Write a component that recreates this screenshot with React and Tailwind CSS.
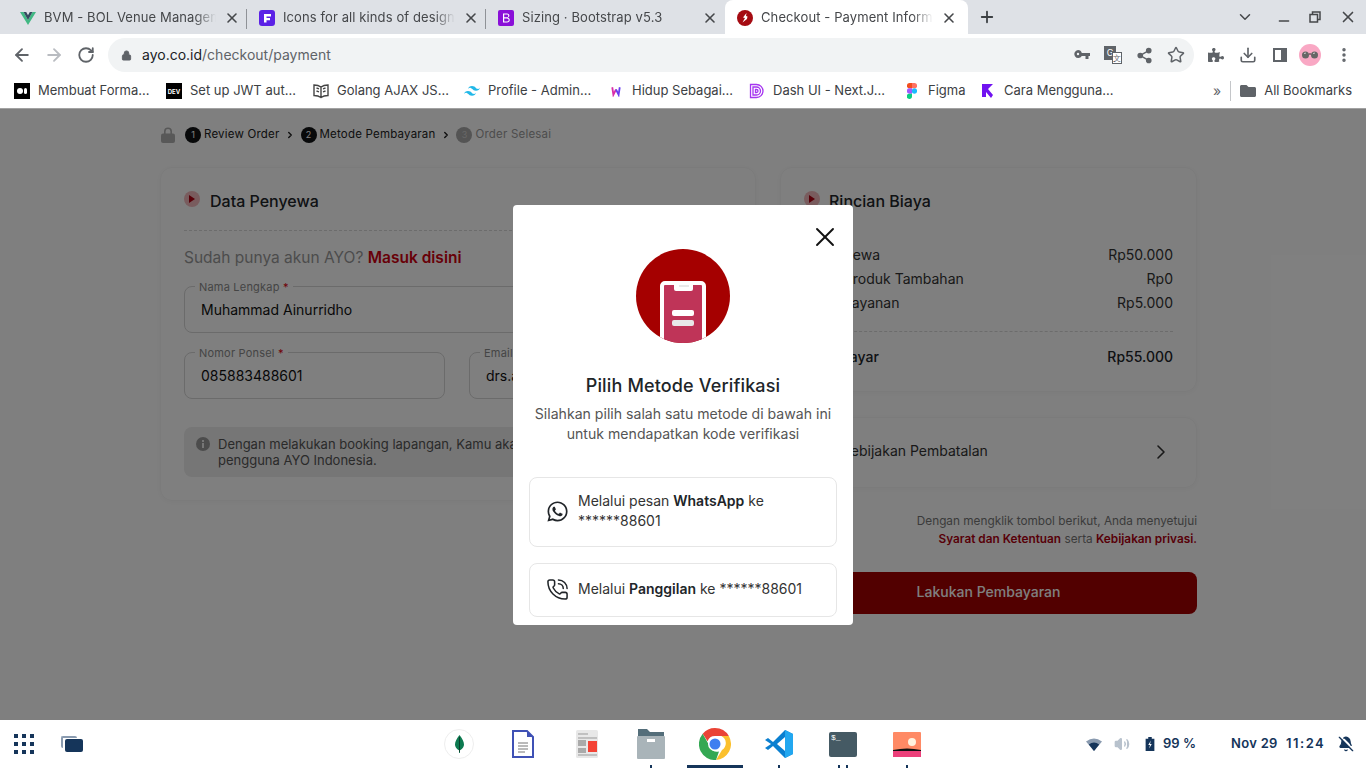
import React from "react";
import { ArrowLeft, ArrowRight, RotateCw, Lock, Share2, Star, Download, X, Plus, ChevronDown, ChevronRight, Minus, EllipsisVertical, PhoneCall, BellOff, Volume2 } from "lucide-react";
import { FaWhatsapp, FaPuzzlePiece, FaFolder } from "react-icons/fa";

const Vue = () => (
  <svg viewBox="0 0 16 16" className="w-4 h-4"><path d="M0 2h3.500L8 10l4.500-8H16L8 15z" fill="#41b883" /><path d="M3.500 2h2.700L8 5.200 9.800 2h2.700L8 10z" fill="#35495e" /></svg>
);
const Framer = () => (
  <svg viewBox="0 0 16 16" className="w-4 h-4"><rect width="16" height="16" rx="3" fill="#5b21e6" /><path d="M5 4h7v2.500H7.500V8H11v2.300H7.500V12.500H5z" fill="#fff" /></svg>
);
const Boot = () => (
  <svg viewBox="0 0 16 16" className="w-4 h-4"><rect width="16" height="16" rx="2" fill="#8a0fd8" /><path d="M5 3.500h4c3 0 3 3.600.8 4.200 2.800.5 2.600 4.800-.8 4.800H5zM6.200 4.600v2.700H9c1.700 0 1.700-2.700 0-2.700zm0 3.800v3H9.200c2 0 2-3-.2-3z" fill="#fff" /></svg>
);
const Ayo = () => (
  <svg viewBox="0 0 16 16" className="w-4 h-4"><circle cx="8" cy="8" r="8" fill="#a50b12" /><path d="M9.500 3 6 7.500l2 .5-2.500 4.500 4.500-3.500.5-2.500-1.500-.5z" fill="#fff" /></svg>
);

const Tab = ({ icon, title, active, sep }) => (
  <div className={active ? "relative w-[243px] h-[34px] flex items-center pl-3 pr-[11px] pt-[2px] bg-white rounded-t-lg" : "relative w-[239px] h-[34px] flex items-center pl-3 pr-[7px] pt-[2px]"}>
    <span className="w-4 h-4 shrink-0">{icon}</span>
    <span className="ml-[8px] w-[172px] overflow-hidden whitespace-nowrap text-[13px] text-[#45474a] tracking-[0.1px] [mask-image:linear-gradient(to_right,black_88%,transparent)]">{title}</span>
    <X className="ml-auto w-4 h-4 text-[#45474a] shrink-0" strokeWidth={2.400} />
    {sep && <span className="absolute right-0 top-[9px] h-[20px] w-px bg-[#8f9297]" />}
  </div>
);

const Bookmark = ({ w, icon, label }) => (
  <div className={`${w} flex items-center shrink-0`}>
    <span className="w-4 h-4 shrink-0 flex items-center justify-center">{icon}</span>
    <span className="ml-2 text-[13px] text-[#3c4043] whitespace-nowrap">{label}</span>
  </div>
);

const Step = ({ n, label, dim }) => (
  <div className={dim ? "flex items-center gap-[3px] text-[#9a9a9a]" : "flex items-center gap-[3px] text-[#222]"}>
    <span className={dim ? "w-4 h-4 rounded-full bg-[#a8a8a8] text-[#d0d0d0] text-[9px] flex items-center justify-center" : "w-4 h-4 rounded-full bg-[#101214] text-white text-[9px] flex items-center justify-center"}>{n}</span>
    <span className="text-[11.500px] tracking-[0.2px] whitespace-nowrap">{label}</span>
  </div>
);

const CardTitle = ({ children, gap }) => (
  <div className={`flex items-center ${gap}`}>
    <span className="w-4 h-4 rounded-full bg-[#f3b9bc] flex items-center justify-center -mt-1">
      <svg viewBox="0 0 8 8" className="w-2 h-2"><path d="M1 0l6 4-6 4z" fill="#b00010" /></svg>
    </span>
    <span className="text-[16px] font-medium text-[#212529]">{children}</span>
  </div>
);

const Field = ({ label, value, className }) => (
  <div className={`relative h-[47px] rounded-lg border border-[#d6d6d6] flex items-center px-4 ${className}`}>
    <span className="absolute -top-[7px] left-[10px] bg-white px-[4px] text-[11px] leading-[14px] text-[#8a8a8a] tracking-[0.2px] whitespace-nowrap">{label} <span className="text-[#e00010]">*</span></span>
    <span className="text-[14px] text-[#111] whitespace-nowrap">{value}</span>
  </div>
);

const Row = ({ l, r, bold }) => (
  <div className={bold ? "flex justify-between font-medium text-[14px] text-[#212529] h-6 items-center" : "flex justify-between text-[14px] text-[#333] h-6 items-center"}>
    <span>{l}</span><span>{r}</span>
  </div>
);

const Dock = ({ children, dots = 0, active }) => (
  <div className="relative w-[64px] h-[48px] flex items-center justify-center">
    {children}
    {active && <span className="absolute bottom-0 left-[4px] w-[56px] h-[3px] bg-[#15355a]" />}
    {dots > 0 && (
      <span className="absolute bottom-0 left-0 right-0 flex justify-center gap-[6px]">
        {Array.from({ length: dots }).map((_, i) => <span key={i} className="w-[2px] h-[3px] bg-[#15355a]" />)}
      </span>
    )}
  </div>
);

export default function App() {
  return (
    <div className="w-[1366px] h-screen flex flex-col overflow-hidden bg-white font-['Inter','Liberation_Sans',sans-serif]">
      {/* tab strip */}
      <div className="h-[34px] bg-[#dee1e6] flex items-center pl-2 shrink-0">
        <Tab icon={<Vue />} title="BVM - BOL Venue Management" sep />
        <Tab icon={<Framer />} title="Icons for all kinds of design projects" sep />
        <Tab icon={<Boot />} title="Sizing · Bootstrap v5.3" />
        <Tab icon={<Ayo />} title="Checkout - Payment Information" active />
        <Plus className="ml-[10px] w-[18px] h-[18px] text-[#3c4043]" strokeWidth={2.400} />
        <div className="ml-auto flex items-center text-[#45474a]">
          <ChevronDown className="w-[18px] h-[18px]" strokeWidth={2} />
          <Minus className="ml-[22px] w-[16px] h-[16px] mt-[8px]" strokeWidth={2} />
          <svg viewBox="0 0 12 12" className="ml-[17px] w-3 h-3" fill="none" stroke="#45474a" strokeWidth="1.500"><rect x="1" y="3.500" width="7.500" height="7.500" /><path d="M3.500 3V1h7.500v7.500H8.500" /></svg>
          <X className="ml-[18px] mr-[9px] w-[18px] h-[18px]" strokeWidth={2.200} />
        </div>
      </div>

      {/* toolbar */}
      <div className="h-[42px] bg-white flex items-center pl-[12px] shrink-0 text-[#5f6368]">
        <ArrowLeft className="w-5 h-5" strokeWidth={2.200} />
        <ArrowRight className="ml-[12px] w-5 h-5 text-[#b9bcc1]" strokeWidth={2.200} />
        <RotateCw className="ml-[13px] w-[18px] h-[18px]" strokeWidth={2.400} />
        <div className="ml-[13px] w-[1086px] h-[34px] rounded-full bg-[#f1f3f4] flex items-center pl-[13px]">
          <Lock className="w-[11px] h-[13px] fill-[#5f6368]" strokeWidth={2} />
          <span className="ml-[10px] -mt-[2px] text-[14px] text-[#202124]">ayo.co.id<span className="text-[#5f6368]">/checkout/payment</span></span>
          <div className="ml-auto flex items-center gap-[14px] pr-[9px]">
            <svg viewBox="0 0 16 10" className="w-[16px] h-[10px]" fill="#5f6368"><path d="M4 0a4 4 0 0 1 3.800 3H16v3h-1.500v3h-3V6H7.800A4 4 0 1 1 4 0zm0 2.800a1.200 1.200 0 1 0 0 2.400 1.200 1.200 0 0 0 0-2.400z" /></svg>
            <span className="w-[18px] h-[18px] relative flex">
              <span className="w-[12px] h-[14px] bg-[#5f6368] text-white text-[9px] leading-[14px] text-center">G</span>
              <span className="absolute right-0 bottom-0 w-[10px] h-[12px] border border-[#5f6368] bg-white text-[8px] leading-[10px] text-center text-[#5f6368]">文</span>
            </span>
            <Share2 className="w-[17px] h-[17px] fill-[#5f6368]" strokeWidth={2} />
            <Star className="w-[18px] h-[18px]" strokeWidth={2} />
          </div>
        </div>
        <FaPuzzlePiece className="ml-[14px] w-[16px] h-[16px]" />
        <Download className="ml-[15px] w-[18px] h-[18px]" strokeWidth={2.200} />
        <span className="ml-[16px] w-[14px] h-[14px] border-2 border-[#5f6368] border-r-[6px]" />
        <span className="ml-[12px] w-[22px] h-[22px] rounded-full bg-[#f9a8c4] flex items-center justify-center">
          <svg viewBox="0 0 18 8" className="w-[18px] h-[8px]"><circle cx="4.500" cy="4" r="3.500" fill="#666" /><circle cx="13.500" cy="4" r="3.500" fill="#666" /><path d="M8 3h2" stroke="#333" strokeWidth="1" /><path d="M3 2.500l2-.5M12 2.500l2-.5" stroke="#ccc" strokeWidth="1" /></svg>
        </span>
        <EllipsisVertical className="ml-[14px] w-[18px] h-[18px]" strokeWidth={2.600} />
      </div>

      {/* bookmarks */}
      <div className="h-[33px] bg-white border-b border-[#a2a2a2] flex items-center pl-[14px] shrink-0 pb-[2px]">
        <Bookmark w="w-[152px]" label="Membuat Forma..." icon={<span className="w-4 h-4 bg-black flex items-center justify-center gap-px"><span className="w-[6px] h-[6px] rounded-full bg-white" /><span className="w-[3px] h-[6px] rounded-full bg-white" /></span>} />
        <Bookmark w="w-[147px]" label="Set up JWT aut..." icon={<span className="w-4 h-4 bg-black text-white text-[6px] font-bold flex items-center justify-center">DEV</span>} />
        <Bookmark w="w-[151px]" label="Golang AJAX JS..." icon={<svg viewBox="0 0 16 16" className="w-4 h-4" fill="none" stroke="#444" strokeWidth="1.400"><path d="M8 4C6 2.500 3.500 2 1 2v10.500c2.500 0 5 .5 7 2 2-1.500 4.500-2 7-2V2c-2.500 0-5 .5-7 2zM8 4v10.500M3.500 5l2.500.8M3.500 8l2.500.8M10 5.800l2.500-.8M10 8.800l2.500-.8" /></svg>} />
        <Bookmark w="w-[144px]" label="Profile - Admin..." icon={<svg viewBox="0 0 16 10" className="w-4 h-[10px]" fill="#22b8e8"><path d="M8 0C5.900 0 4.500 1 4 3c.8-1 1.700-1.400 2.800-1.100.6.200 1 .6 1.500 1.100.8.800 1.700 1.700 3.700 1.700 2.100 0 3.500-1 4-3-.8 1-1.700 1.400-2.800 1.100-.6-.2-1-.6-1.500-1.100C10.900.900 10 0 8 0zM4 5C1.900 5 .5 6 0 8c.8-1 1.700-1.400 2.800-1.100.6.200 1 .6 1.500 1.100.8.800 1.700 1.700 3.700 1.700 2.100 0 3.500-1 4-3-.8 1-1.700 1.400-2.800 1.100-.6-.2-1-.6-1.500-1.100C6.900 5.900 6 5 4 5z" /></svg>} />
        <Bookmark w="w-[141px]" label="Hidup Sebagai..." icon={<svg viewBox="0 0 16 16" className="w-[12px] h-[12px]" fill="none" strokeWidth="2.400"><path d="M3 3l1.500 10L8 6" stroke="#d92ea8" /><path d="M8 6l3.500 7L13 3" stroke="#6a3df0" /></svg>} />
        <Bookmark w="w-[155px]" label="Dash UI - Next.J..." icon={<svg viewBox="0 0 16 16" className="w-4 h-4" fill="none" stroke="#a535f0" strokeWidth="1.300"><path d="M1.500 1.500h6a6.500 6.500 0 0 1 0 13h-6zM4 4h3.500a4 4 0 0 1 0 8H4zM6.500 6.500h1a1.500 1.500 0 0 1 0 3h-1z" /></svg>} />
        <Bookmark w="w-[76px]" label="Figma" icon={<svg viewBox="0 0 10 16" className="w-[10px] h-4"><path d="M2.500 0H5v5.300H2.500a2.650 2.650 0 0 1 0-5.300z" fill="#f24e1e" /><path d="M5 0h2.500a2.650 2.650 0 0 1 0 5.300H5z" fill="#ff7262" /><path d="M2.500 5.300H5v5.400H2.500a2.700 2.700 0 0 1 0-5.400z" fill="#a259ff" /><circle cx="7.500" cy="8" r="2.650" fill="#1abcfe" /><path d="M2.500 10.700H5v2.650a2.650 2.650 0 1 1-2.500-2.650z" fill="#0acf83" /></svg>} />
        <Bookmark w="w-[210px]" label="Cara Mengguna..." icon={<svg viewBox="0 0 16 16" className="w-4 h-4" fill="#7012f0"><path d="M2 1h11L8 6l5 6-2 3-5-6v5H2z" /></svg>} />
        <span className="ml-[23px] text-[14px] text-[#5f6368] leading-none">»</span>
        <span className="ml-[9px] w-px h-[20px] bg-[#c4c6c9]" />
        <FaFolder className="ml-[9px] w-4 h-4 text-[#5f6368]" />
        <span className="ml-2 text-[13px] text-[#3c4043] whitespace-nowrap">All Bookmarks</span>
      </div>

      {/* page */}
      <div className="relative flex-1 min-h-0 bg-white overflow-hidden">
        <div className="ml-[160px] w-[1037px] pt-[18px]">
          <div className="flex items-center h-4 text-[#222]">
            <svg viewBox="0 0 14 16" className="ml-px w-[14px] h-[16px]" fill="#b0b0b0"><path d="M3 7V4.500a4 4 0 0 1 8 0V7h-1.600V4.500a2.400 2.400 0 0 0-4.800 0V7z" /><rect y="6.500" width="14" height="9.500" rx="2" /></svg>
            <div className="ml-[10px] flex items-center">
              <Step n="1" label="Review Order" />
              <ChevronRight className="mx-[5.500px] w-[10px] h-[10px] text-[#222]" strokeWidth={3.400} />
              <Step n="2" label="Metode Pembayaran" />
              <ChevronRight className="mx-[5.500px] w-[10px] h-[10px] text-[#222]" strokeWidth={3.400} />
              <Step n="3" label="Order Selesai" dim />
            </div>
          </div>

          <div className="mt-[24px] flex gap-[24px] items-start">
            {/* left card */}
            <div className="w-[596px] h-[334px] rounded-xl border border-[#f6f6f6] shadow-[0_1px_6px_rgba(0,0,0,0.04)] px-[23px] pt-[21px]">
              <CardTitle gap="gap-[10px]">Data Penyewa</CardTitle>
              <div className="mt-[17px] border-t border-dashed border-[#d8d8d8]" />
              <div className="mt-[17px] text-[15.500px] text-[#999] leading-[20px]">Sudah punya akun AYO? <span className="font-semibold text-[#d00010]">Masuk disini</span></div>
              <Field className="mt-[18px]" label="Nama Lengkap" value="Muhammad Ainurridho" />
              <div className="mt-[19px] flex gap-[24px]">
                <Field className="w-[261px]" label="Nomor Ponsel" value="085883488601" />
                <Field className="flex-1" label="Email" value="drs.ainurridho@gmail.com" />
              </div>
              <div className="mt-[28px] h-[50px] rounded-lg bg-[#ececec] flex gap-[8px] px-[12px] items-start pt-[9px]">
                <svg viewBox="0 0 14 14" className="w-[14px] h-[14px] shrink-0 mt-px"><circle cx="7" cy="7" r="7" fill="#999" /><rect x="6" y="6" width="2" height="5" fill="#ececec" /><rect x="6" y="3" width="2" height="2" fill="#ececec" /></svg>
                <span className="text-[13px] leading-[16px] text-[#555]">Dengan melakukan booking lapangan, Kamu akan otomatis terdaftar sebagai pengguna AYO Indonesia.</span>
              </div>
            </div>

            {/* right column */}
            <div className="w-[417px]">
              <div className="h-[225px] rounded-xl border border-[#f6f6f6] shadow-[0_1px_6px_rgba(0,0,0,0.04)] pl-[23px] pr-[23px] pt-[21px]">
                <CardTitle gap="gap-[9px]">Rincian Biaya</CardTitle>
                <div className="mt-[29px]">
                  <Row l="Biaya Sewa" r="Rp50.000" />
                  <Row l="Biaya Produk Tambahan" r="Rp0" />
                  <Row l="Biaya Layanan" r="Rp5.000" />
                </div>
                <div className="mt-[17px] border-t border-dashed border-[#d8d8d8]" />
                <div className="mt-[12px]"><Row bold l="Total Bayar" r="Rp55.000" /></div>
              </div>
              <div className="mt-[25px] h-[71px] rounded-xl border border-[#f6f6f6] shadow-[0_1px_6px_rgba(0,0,0,0.04)] pl-[61px] pr-[24px] flex items-center justify-between">
                <span className="text-[14px] text-[#333] -mt-[4px]">Kebijakan Pembatalan</span>
                <ChevronRight className="w-[24px] h-[24px] text-[#333] -mr-[1px] -mt-[2px]" strokeWidth={1.600} />
              </div>
              <div className="mt-[24px] text-right text-[11.800px] leading-[18px] text-[#777]">
                <div>Dengan mengklik tombol berikut, Anda menyetujui</div>
                <div><span className="font-semibold text-[#b00010]">Syarat dan Ketentuan</span> serta <span className="font-semibold text-[#b00010]">Kebijakan privasi.</span></div>
              </div>
              <div className="mt-[24px] h-[42px] rounded-lg bg-[#a50000] flex items-center justify-center pb-[3px] text-[14px] font-medium text-white">Lakukan Pembayaran</div>
            </div>
          </div>
        </div>

        {/* overlay + modal */}
        <div className="absolute inset-0 bg-black/50 flex items-center justify-center">
          <div className="relative w-[340px] h-[420px] bg-white rounded-[4px] flex flex-col items-center pt-[44px] px-[16px]">
            <X className="absolute top-[16px] right-[12px] w-[32px] h-[32px] text-[#111]" strokeWidth={1.400} />
            <div className="relative w-[94px] h-[94px] rounded-full bg-[#a50000] overflow-hidden shrink-0">
              <div className="absolute left-[24px] top-[32px] w-[46px] h-[70px] rounded-[5px] border-[4px] border-white bg-[#bf3458]">
                <div className="absolute left-[10px] -top-[1px] w-[19px] h-[7px] rounded-b-[2px] bg-white flex justify-center pt-px">
                  <span className="w-[10px] h-[2px] bg-[#e8e8e8]" />
                </div>
                <div className="absolute left-[8px] top-[25px] w-[22px] h-[6px] rounded-[2px] bg-white" />
                <div className="absolute left-[8px] top-[35px] w-[22px] h-[6px] rounded-[2px] bg-[#e8e8e8]" />
              </div>
            </div>
            <div className="mt-[32px] text-[18px] leading-[22px] font-medium tracking-[0.15px] text-[#212529] whitespace-nowrap">Pilih Metode Verifikasi</div>
            <div className="mt-[7px] text-center text-[14.100px] leading-[20px] text-[#555] whitespace-nowrap">Silahkan pilih salah satu metode di bawah ini<br />untuk mendapatkan kode verifikasi</div>
            <div className="mt-[33px] w-[308px] h-[70px] rounded-lg border border-[#e6e6e6] flex items-center pl-[16px] pr-[12px] gap-[9px] shrink-0">
              <FaWhatsapp className="w-[23px] h-[23px] text-[#212529] shrink-0" />
              <span className="text-[14px] leading-[20px] text-[#333] -mt-[2px]">Melalui pesan <b className="font-semibold text-[#212529]">WhatsApp</b> ke<br />******88601</span>
            </div>
            <div className="mt-[16px] w-[308px] h-[54px] rounded-lg border border-[#e6e6e6] flex items-center pl-[16px] pr-[12px] gap-[9px] shrink-0">
              <PhoneCall className="w-[23px] h-[23px] text-[#212529] shrink-0" strokeWidth={1.600} />
              <span className="text-[14px] leading-[20px] text-[#333] whitespace-nowrap -mt-[2px]">Melalui <b className="font-semibold text-[#212529]">Panggilan</b> ke ******88601</span>
            </div>
          </div>
        </div>
      </div>

      {/* taskbar */}
      <div className="h-[48px] bg-white flex items-center shrink-0 relative">
        <div className="ml-[14px] grid grid-cols-3 gap-[4px] w-[20px]">
          {Array.from({ length: 9 }).map((_, i) => <span key={i} className="w-[4px] h-[4px] bg-[#15355a]" />)}
        </div>
        <div className="relative ml-[27px] w-[22px] h-[16px]">
          <span className="absolute left-0 top-0 w-[16px] h-[12px] rounded-[2px] border-l-2 border-t-2 border-[#8a9bb0]" />
          <span className="absolute right-0 bottom-0 w-[18px] h-[13px] rounded-[2px] bg-[#15355a]" />
        </div>
        <div className="ml-[344px] flex">
          <Dock>
            <span className="w-[30px] h-[30px] rounded-full bg-white border border-[#eee] flex items-center justify-center">
              <svg viewBox="0 0 10 20" className="w-[9px] h-[18px]"><path d="M5 0c3 4 5 7 5 10.500S7 16 5.500 17v3h-1v-3C3 16 0 14 0 10.500S2 4 5 0z" fill="#0d7a50" /><path d="M5 2v17" stroke="#0a3a28" strokeWidth="1" /></svg>
            </span>
          </Dock>
          <Dock>
            <svg viewBox="0 0 22 28" className="w-[22px] h-[28px]"><path d="M1 1h14l6 6v20H1z" fill="#fff" stroke="#3f51b5" strokeWidth="2" /><path d="M15 1v6h6z" fill="#3f51b5" /><path d="M6 13h10M6 16h10M6 19h10M6 22h7" stroke="#777" strokeWidth="1" /></svg>
          </Dock>
          <Dock>
            <svg viewBox="0 0 22 28" className="w-[22px] h-[28px]"><rect width="22" height="28" rx="1.500" fill="#e8e8e8" /><path d="M2 4h10M2 8h19M2 25h19" stroke="#999" strokeWidth="1" /><rect x="2" y="10" width="8" height="6" fill="#aaa" /><rect x="2" y="18" width="8" height="5" fill="#aaa" /><rect x="12" y="11" width="9" height="11" fill="#f44336" /></svg>
          </Dock>
          <Dock dots={1}>
            <svg viewBox="0 0 28 30" className="w-[28px] h-[30px]"><path d="M1 0h9l3 3h14v6H1z" fill="#546e7a" /><rect y="7" width="28" height="23" rx="1" fill="#a9b4b9" /><rect x="10" y="10" width="8" height="3" fill="#fff" /></svg>
          </Dock>
          <Dock active>
            <svg viewBox="0 0 32 32" className="w-[32px] h-[32px]">
              <path d="M16 0a16 16 0 0 1 13.860 8H16a8 8 0 0 0-7.500 5.200L3.700 5.700A16 16 0 0 1 16 0z" fill="#ea4335" />
              <path d="M29.860 8A16 16 0 0 1 17 32l6-10a8 8 0 0 0-.700-14z" fill="#fbc02d" />
              <path d="M3.700 5.700 10 17a8 8 0 0 0 10 6.500L17 32A16 16 0 0 1 3.700 5.700z" fill="#34a853" />
              <circle cx="16" cy="16" r="7" fill="#fff" /><circle cx="16" cy="16" r="5.500" fill="#3f7ff0" />
            </svg>
          </Dock>
          <Dock dots={1}>
            <svg viewBox="0 0 28 28" className="w-[28px] h-[28px]"><path d="M20 0 28 4v20l-8 4L8 16l-5 4-3-2 6-4-6-4 3-2 5 4z" fill="#0a7fd0" /><path d="M20 0 28 4v20l-8 4z" fill="#22a7f0" /><path d="M20 7v14l-8-7z" fill="#fff" /></svg>
          </Dock>
          <Dock dots={2}>
            <span className="w-[28px] h-[25px] rounded-[2px] bg-[#455a64] text-white text-[8px] leading-[12px] pl-[2px] font-['Liberation_Mono',monospace]">$_</span>
          </Dock>
          <Dock dots={1}>
            <svg viewBox="0 0 28 25" className="w-[28px] h-[25px]"><rect width="28" height="25" rx="1" fill="#ff8a65" /><circle cx="19" cy="10" r="4" fill="#fff3e0" /><path d="M0 18h28v7H0z" fill="#ec407a" /><path d="M0 18q14-3 28 0v1H0z" fill="#111" /></svg>
          </Dock>
        </div>
        <div className="ml-auto flex items-center text-[#15355a] pr-[12px]">
          <svg viewBox="0 0 16 13" className="w-4 h-[13px]"><path d="M8 13 0 3.500Q8-2.500 16 3.500z" fill="#8a9bb0" /><path d="M8 13 2.800 6.500Q8 2.500 13.200 6.500z" fill="#15355a" /></svg>
          <Volume2 className="ml-[12px] w-[16px] h-[16px] text-[#b8c2cd] fill-[#b8c2cd]" />
          <svg viewBox="0 0 10 16" className="ml-[15px] w-[10px] h-[14px]" fill="#15355a"><path d="M3 0h4v2h3v14H0V2h3z" /><path d="M6 4 3 9h2l-1 4 3-5H5z" fill="#fff" /></svg>
          <span className="ml-[8px] w-[32px] text-[13px] font-semibold whitespace-nowrap">99 %</span>
          <span className="ml-[36px] w-[47px] text-[13px] font-semibold whitespace-nowrap tracking-[0.3px]">Nov 29</span>
          <span className="ml-[8px] w-[39px] text-[13px] font-semibold whitespace-nowrap tracking-[1.500px]">11:24</span>
          <BellOff className="ml-[13px] w-[16px] h-[16px] fill-[#15355a]" />
        </div>
      </div>
    </div>
  );
}
